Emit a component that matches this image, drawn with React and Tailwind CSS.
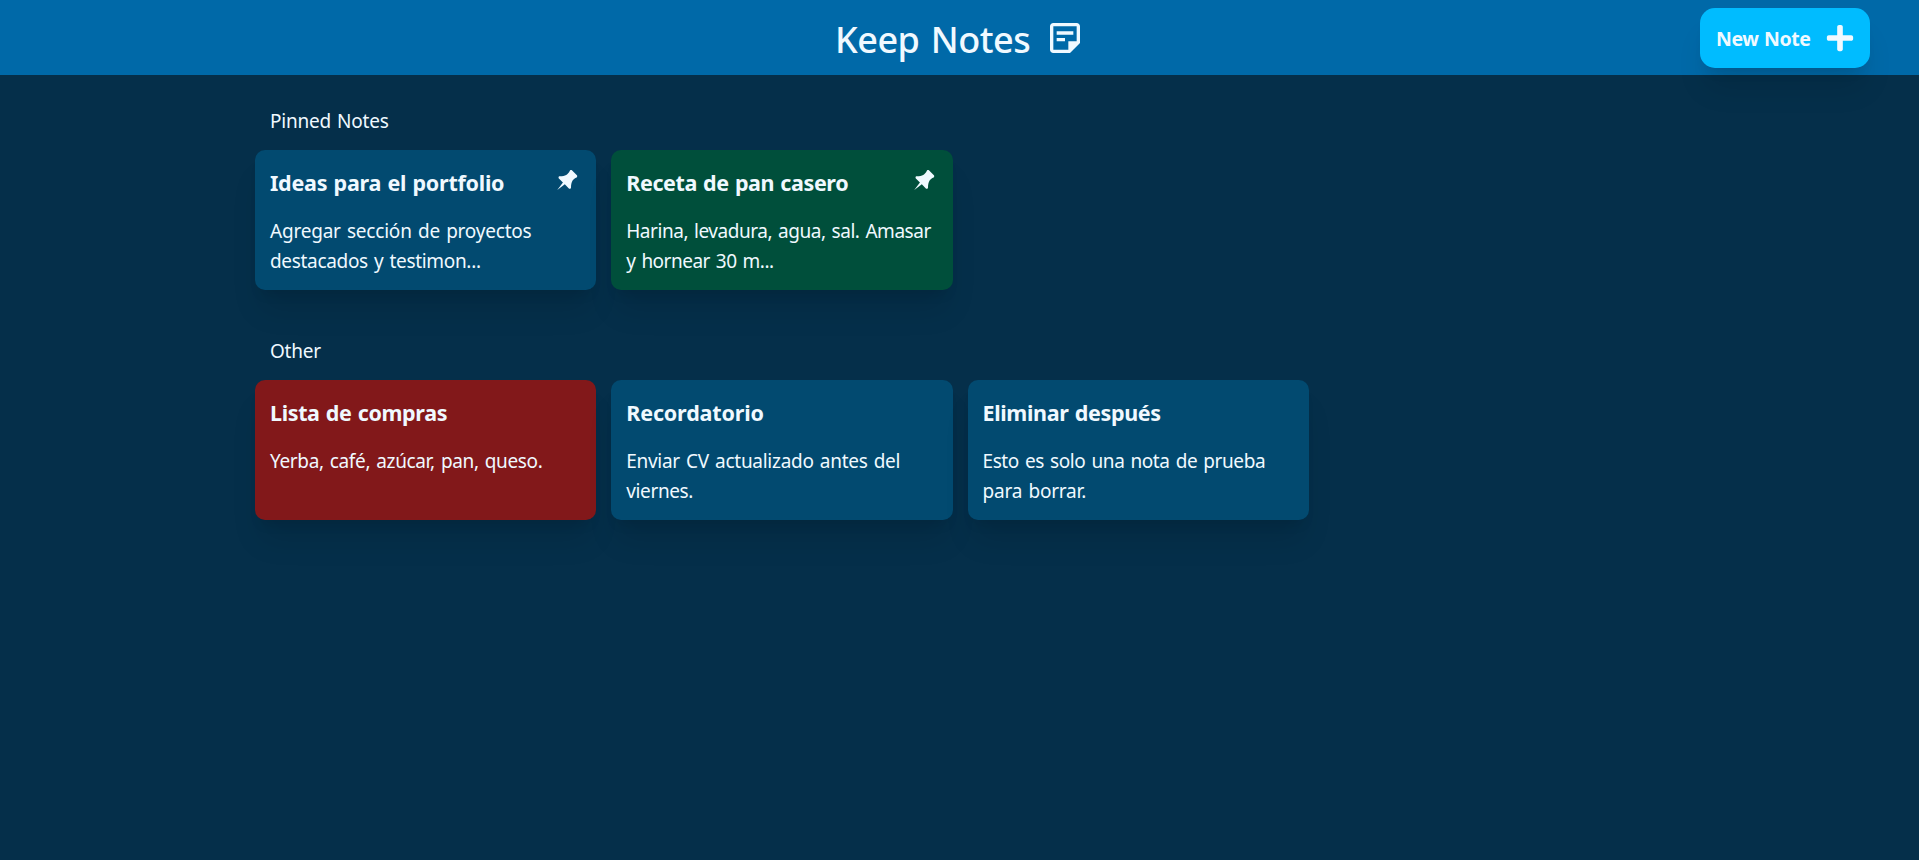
import { FaPlus } from "react-icons/fa";
import { MdOutlineStickyNote2 } from "react-icons/md";
import { TiPin } from "react-icons/ti";

const pinnedNotes = [
  {
    title: "Ideas para el portfolio",
    titleTracking: "tracking-[-0.25px]",
    color: "bg-[#024a70]",
    lines: [
      { text: "Agregar sección de proyectos", tracking: "tracking-[-0.21px]" },
      { text: "destacados y testimon...", tracking: "tracking-[-0.32px]" },
    ],
    pinned: true,
  },
  {
    title: "Receta de pan casero",
    titleTracking: "tracking-[-0.4px]",
    color: "bg-[#004f3b]",
    lines: [
      { text: "Harina, levadura, agua, sal. Amasar", tracking: "tracking-[-0.46px]" },
      { text: "y hornear 30 m...", tracking: "tracking-[-0.5px]" },
    ],
    pinned: true,
  },
];

const otherNotes = [
  {
    title: "Lista de compras",
    titleTracking: "tracking-[-0.37px]",
    color: "bg-[#82181a]",
    lines: [{ text: "Yerba, café, azúcar, pan, queso.", tracking: "tracking-[-0.35px]" }],
  },
  {
    title: "Recordatorio",
    titleTracking: "tracking-[-0.15px]",
    color: "bg-[#024a70]",
    lines: [
      { text: "Enviar CV actualizado antes del", tracking: "tracking-[-0.28px]" },
      { text: "viernes.", tracking: "tracking-[-0.37px]" },
    ],
  },
  {
    title: "Eliminar después",
    titleTracking: "tracking-[-0.34px]",
    color: "bg-[#024a70]",
    lines: [
      { text: "Esto es solo una nota de prueba", tracking: "tracking-[-0.4px]" },
      { text: "para borrar.", tracking: "tracking-[-0.2px]" },
    ],
  },
];

const shadow = "shadow-[0_25px_31.25px_-6.25px_rgba(0,0,0,0.1),0_10px_12.5px_-7.5px_rgba(0,0,0,0.1)]";

function NoteCard({ note }) {
  return (
    <article className={`flex h-[140px] flex-col gap-[15px] rounded-[10px] p-[15px] ${note.color} ${shadow}`}>
      <div className="flex h-[35px] items-start justify-between">
        <h3
          className={`whitespace-nowrap text-[21.5px] font-bold leading-[35px] [word-spacing:1px] ${note.titleTracking}`}
        >
          {note.title}
        </h3>
        {note.pinned && <TiPin size={30} className="shrink-0" />}
      </div>
      <p className="pt-px text-[19px] leading-[30px] [word-spacing:1.5px]">
        {note.lines.map((line) => (
          <span key={line.text} className={`block whitespace-nowrap ${line.tracking}`}>
            {line.text}
          </span>
        ))}
      </p>
    </article>
  );
}

function NoteSection({ title, tracking, notes }) {
  return (
    <section className="flex flex-col gap-[14px]">
      <h2 className={`px-[15px] pt-px text-[19px] leading-[30px] [word-spacing:1.5px] ${tracking}`}>{title}</h2>
      <div className="grid grid-cols-4 gap-[15px]">
        {notes.map((note) => (
          <NoteCard key={note.title} note={note} />
        ))}
      </div>
    </section>
  );
}

export default function App() {
  return (
    <div className="min-h-screen bg-[#052f4a] font-['Noto_Sans',sans-serif] text-[#f0f9ff]">
      <header className="grid h-[75px] grid-cols-[1fr_auto_1fr] items-center bg-[#0069a8] pt-px">
        <div />
        <div className="flex w-[251px] items-center justify-between">
          <h1 className="whitespace-nowrap pl-px pt-0.5 text-[36px] font-medium leading-[45px] tracking-[-0.5px] [word-spacing:2.5px]">
            Keep Notes
          </h1>
          <MdOutlineStickyNote2 size={40} className="shrink-0" />
        </div>
        <button
          className={`mr-[49px] flex h-[60px] w-[170px] items-center justify-between justify-self-end rounded-[15px] bg-[#00bcff] px-[15px] ${shadow}`}
        >
          <span className="whitespace-nowrap pl-px pt-0.5 text-[19.5px] font-bold leading-[30px] tracking-[-0.4px] [word-spacing:0.7px]">
            New Note
          </span>
          <FaPlus size={30} className="shrink-0" />
        </button>
      </header>
      <main className="ml-[255px] flex w-[1410px] flex-col gap-[45px] pt-[30px]">
        <NoteSection title="Pinned Notes" tracking="tracking-[-0.23px]" notes={pinnedNotes} />
        <NoteSection title="Other" tracking="tracking-[-0.25px]" notes={otherNotes} />
      </main>
    </div>
  );
}
